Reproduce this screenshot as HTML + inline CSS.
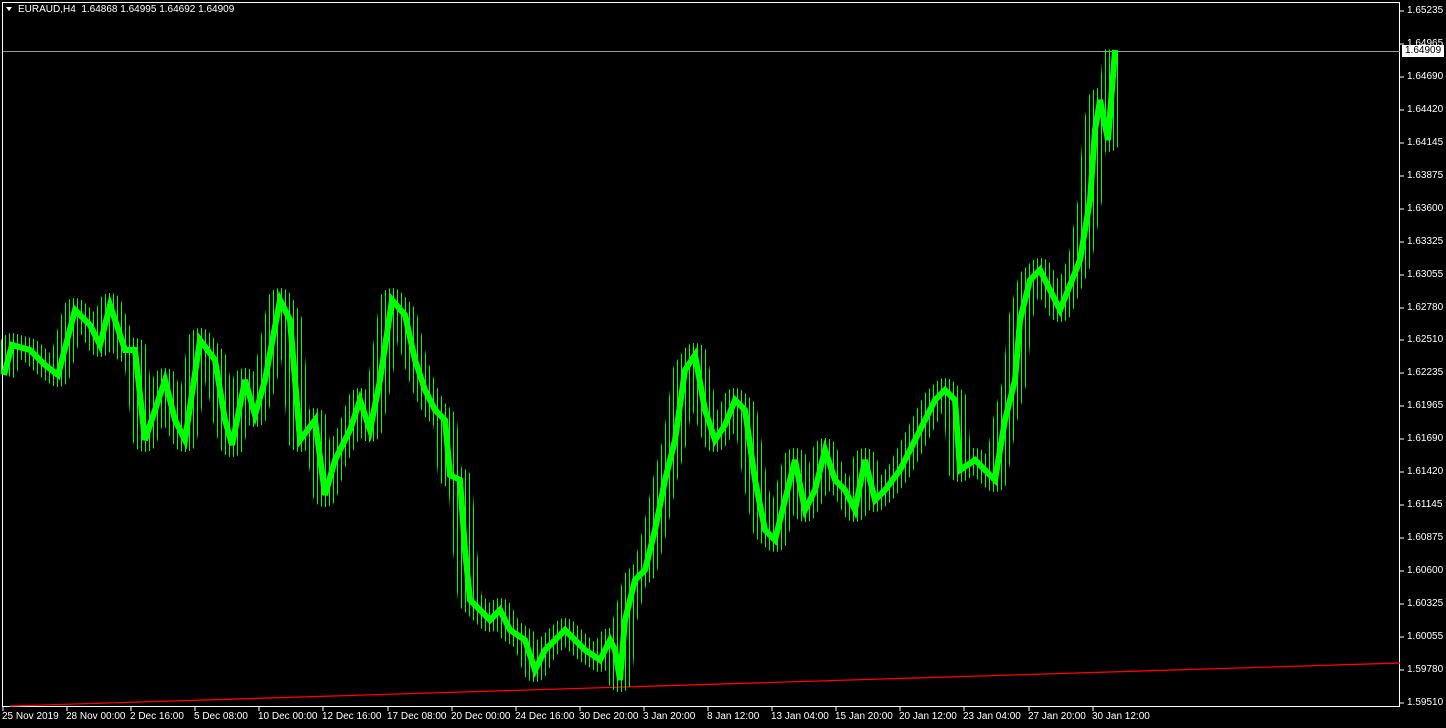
<!DOCTYPE html>
<html><head><meta charset="utf-8"><style>
html,body{margin:0;padding:0;background:#000;width:1446px;height:728px;overflow:hidden;font-family:"Liberation Sans",sans-serif}
svg{position:absolute;left:0;top:0}
.t{position:absolute;color:#fff;font-size:10px;white-space:nowrap;line-height:12px}
</style></head><body>
<svg width="1446" height="728" xmlns="http://www.w3.org/2000/svg">
<defs>
<pattern id="wk" x="0" y="0" width="4" height="10" patternUnits="userSpaceOnUse"><rect x="1" y="0" width="1" height="10" fill="#0f0" shape-rendering="crispEdges"/></pattern>
<mask id="m"><polyline fill="none" stroke="#fff" stroke-width="24" stroke-linejoin="round" points="4,375 12,345 30,350 45,365 58,375 75,310 90,325 100,345 110,305 125,350 135,350 145,440 155,410 165,380 175,420 185,440 200,340 215,360 225,420 232,445 245,380 255,415 265,380 280,300 290,320 300,440 315,420 325,495 335,460 350,430 360,400 370,430 380,380 392,300 405,315 415,360 425,390 435,410 445,420 450,475 460,480 465,550 470,600 480,610 490,620 500,610 510,630 525,640 535,670 545,650 555,640 565,630 575,640 585,650 600,660 610,640 615,650 620,680 625,620 635,580 645,570 655,530 665,480 675,440 685,370 695,355 705,410 715,440 725,425 735,400 745,410 755,480 765,530 775,540 785,500 795,460 805,510 815,490 825,450 835,480 845,490 855,510 865,460 875,500 885,490 900,470 910,450 920,430 935,400 945,390 955,400 960,470 975,460 985,470 995,480 1005,420 1015,380 1020,320 1030,280 1040,270 1050,290 1060,310 1070,285 1080,260 1090,200 1095,130 1100,100 1108,140 1115,50"/></mask>
</defs>
<path d="M6,7 L12,7 L9,11 Z" fill="#fff"/>
<rect x="2.5" y="2.5" width="1397" height="704" fill="none" stroke="#fff"/>
<line x1="3" y1="51.5" x2="1400" y2="51.5" stroke="#999"/>
<line x1="10" y1="706" x2="1400" y2="663" stroke="#f00" stroke-width="1.3"/>
<rect x="0" y="30" width="1120" height="670" fill="url(#wk)" mask="url(#m)"/>
<polyline fill="none" stroke="#0f0" stroke-width="6" stroke-linejoin="miter" points="4,375 12,345 30,350 45,365 58,375 75,310 90,325 100,345 110,305 125,350 135,350 145,440 155,410 165,380 175,420 185,440 200,340 215,360 225,420 232,445 245,380 255,415 265,380 280,300 290,320 300,440 315,420 325,495 335,460 350,430 360,400 370,430 380,380 392,300 405,315 415,360 425,390 435,410 445,420 450,475 460,480 465,550 470,600 480,610 490,620 500,610 510,630 525,640 535,670 545,650 555,640 565,630 575,640 585,650 600,660 610,640 615,650 620,680 625,620 635,580 645,570 655,530 665,480 675,440 685,370 695,355 705,410 715,440 725,425 735,400 745,410 755,480 765,530 775,540 785,500 795,460 805,510 815,490 825,450 835,480 845,490 855,510 865,460 875,500 885,490 900,470 910,450 920,430 935,400 945,390 955,400 960,470 975,460 985,470 995,480 1005,420 1015,380 1020,320 1030,280 1040,270 1050,290 1060,310 1070,285 1080,260 1090,200 1095,130 1100,100 1108,140 1115,50"/>
<g stroke="#fff">
<line x1="1400" y1="11" x2="1404" y2="11"/><line x1="1400" y1="44" x2="1404" y2="44"/><line x1="1400" y1="77" x2="1404" y2="77"/><line x1="1400" y1="110" x2="1404" y2="110"/><line x1="1400" y1="143" x2="1404" y2="143"/><line x1="1400" y1="176" x2="1404" y2="176"/><line x1="1400" y1="209" x2="1404" y2="209"/><line x1="1400" y1="242" x2="1404" y2="242"/><line x1="1400" y1="275" x2="1404" y2="275"/><line x1="1400" y1="308" x2="1404" y2="308"/><line x1="1400" y1="340" x2="1404" y2="340"/><line x1="1400" y1="373" x2="1404" y2="373"/><line x1="1400" y1="406" x2="1404" y2="406"/><line x1="1400" y1="439" x2="1404" y2="439"/><line x1="1400" y1="472" x2="1404" y2="472"/><line x1="1400" y1="505" x2="1404" y2="505"/><line x1="1400" y1="538" x2="1404" y2="538"/><line x1="1400" y1="571" x2="1404" y2="571"/><line x1="1400" y1="604" x2="1404" y2="604"/><line x1="1400" y1="637" x2="1404" y2="637"/><line x1="1400" y1="670" x2="1404" y2="670"/><line x1="1400" y1="703" x2="1404" y2="703"/>
<line x1="3" y1="707" x2="3" y2="711"/><line x1="67" y1="707" x2="67" y2="711"/><line x1="131" y1="707" x2="131" y2="711"/><line x1="195" y1="707" x2="195" y2="711"/><line x1="259" y1="707" x2="259" y2="711"/><line x1="323" y1="707" x2="323" y2="711"/><line x1="388" y1="707" x2="388" y2="711"/><line x1="452" y1="707" x2="452" y2="711"/><line x1="516" y1="707" x2="516" y2="711"/><line x1="580" y1="707" x2="580" y2="711"/><line x1="644" y1="707" x2="644" y2="711"/><line x1="708" y1="707" x2="708" y2="711"/><line x1="772" y1="707" x2="772" y2="711"/><line x1="836" y1="707" x2="836" y2="711"/><line x1="900" y1="707" x2="900" y2="711"/><line x1="964" y1="707" x2="964" y2="711"/><line x1="1029" y1="707" x2="1029" y2="711"/><line x1="1093" y1="707" x2="1093" y2="711"/>
</g>
</svg>
<div class="t" style="left:18px;top:4px">EURAUD,H4&nbsp; 1.64868 1.64995 1.64692 1.64909</div>
<div class="t" style="left:1407px;top:5px">1.65235</div>
<div class="t" style="left:1407px;top:38px">1.64965</div>
<div class="t" style="left:1407px;top:71px">1.64690</div>
<div class="t" style="left:1407px;top:104px">1.64420</div>
<div class="t" style="left:1407px;top:137px">1.64145</div>
<div class="t" style="left:1407px;top:170px">1.63875</div>
<div class="t" style="left:1407px;top:203px">1.63600</div>
<div class="t" style="left:1407px;top:236px">1.63325</div>
<div class="t" style="left:1407px;top:269px">1.63055</div>
<div class="t" style="left:1407px;top:302px">1.62780</div>
<div class="t" style="left:1407px;top:334px">1.62510</div>
<div class="t" style="left:1407px;top:367px">1.62235</div>
<div class="t" style="left:1407px;top:400px">1.61965</div>
<div class="t" style="left:1407px;top:433px">1.61690</div>
<div class="t" style="left:1407px;top:466px">1.61420</div>
<div class="t" style="left:1407px;top:499px">1.61145</div>
<div class="t" style="left:1407px;top:532px">1.60875</div>
<div class="t" style="left:1407px;top:565px">1.60600</div>
<div class="t" style="left:1407px;top:598px">1.60325</div>
<div class="t" style="left:1407px;top:631px">1.60055</div>
<div class="t" style="left:1407px;top:664px">1.59780</div>
<div class="t" style="left:1407px;top:697px">1.59510</div>
<div style="position:absolute;left:1402px;top:45px;width:42px;height:12px;background:#fff;color:#000;font-size:10px;line-height:12px;padding-left:3px;box-sizing:border-box">1.64909</div>
<div class="t" style="left:2px;top:711px">25 Nov 2019</div>
<div class="t" style="left:66px;top:711px">28 Nov 00:00</div>
<div class="t" style="left:130px;top:711px">2 Dec 16:00</div>
<div class="t" style="left:194px;top:711px">5 Dec 08:00</div>
<div class="t" style="left:258px;top:711px">10 Dec 00:00</div>
<div class="t" style="left:322px;top:711px">12 Dec 16:00</div>
<div class="t" style="left:387px;top:711px">17 Dec 08:00</div>
<div class="t" style="left:451px;top:711px">20 Dec 00:00</div>
<div class="t" style="left:515px;top:711px">24 Dec 16:00</div>
<div class="t" style="left:579px;top:711px">30 Dec 20:00</div>
<div class="t" style="left:643px;top:711px">3 Jan 20:00</div>
<div class="t" style="left:707px;top:711px">8 Jan 12:00</div>
<div class="t" style="left:771px;top:711px">13 Jan 04:00</div>
<div class="t" style="left:835px;top:711px">15 Jan 20:00</div>
<div class="t" style="left:899px;top:711px">20 Jan 12:00</div>
<div class="t" style="left:963px;top:711px">23 Jan 04:00</div>
<div class="t" style="left:1028px;top:711px">27 Jan 20:00</div>
<div class="t" style="left:1092px;top:711px">30 Jan 12:00</div>
</body></html>
